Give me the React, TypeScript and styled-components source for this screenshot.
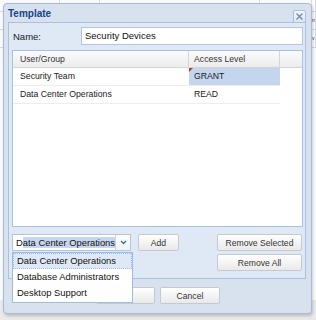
import styled, { createGlobalStyle } from 'styled-components';

const FONT = '"Liberation Sans", Arial, sans-serif';

const GlobalStyle = createGlobalStyle`
  html, body {
    margin: 0;
    padding: 0;
    background: #ececec;
    font-family: ${FONT};
  }
`;

const Desktop = styled.div`
  position: relative;
  width: 316px;
  height: 320px;
  overflow: hidden;
  background: #e9e9e9;
`;

// grid that sits behind the window; only its edges show
const Backdrop = styled.div`
  display: flex;
  flex-direction: column;
  background: #fafafa;
  height: 300px;
`;

const BackRow = styled.div`
  height: 17px;
  border-bottom: 1px solid #d6d6d6;
  display: grid;
  grid-template-columns: 60px 40px 160px 52px 1fr;
  color: #333;
  line-height: 17px;

  & > span {
    border-right: 1px solid #dcdcdc;
    white-space: nowrap;
    overflow: hidden;
  }
`;

const EdgeText = styled.span`
  font-size: 5px;
  padding-left: 0;
`;

const Window = styled.div`
  position: absolute;
  left: 3px;
  top: 3px;
  width: 309px;
  height: 311px;
  box-sizing: border-box;
  border: 1px solid #a4bcd9;
  border-radius: 4px;
  background: #d8e2ee;
  box-shadow: 1px 2px 3px rgba(0, 0, 0, 0.18);
  display: flex;
  flex-direction: column;
`;

const Header = styled.div`
  height: 18px;
  display: flex;
  align-items: center;
  justify-content: space-between;
  padding: 0 5px 0 4px;
`;

const Title = styled.span`
  font-size: 10px;
  font-weight: bold;
  color: #15428b;
`;

const CloseButton = styled.div`
  width: 11px;
  height: 11px;
  border: 1px solid #a7bfdc;
  border-radius: 2px;
  background: linear-gradient(#f3f7fc, #dde7f3);
  display: flex;
  align-items: center;
  justify-content: center;
  margin-top: 6px;
`;

const BodyPanel = styled.div`
  margin: 0 5px 0 4px;
  height: 257px;
  box-sizing: border-box;
  border: 1px solid #a9c0de;
  background: #dfe8f5;
  padding: 4px 2px 0 2px;
  display: flex;
  flex-direction: column;
`;

const FieldRow = styled.div`
  display: flex;
  align-items: center;
  height: 18px;
`;

const Label = styled.span`
  width: 68px;
  padding-left: 2px;
  font-size: 9.5px;
  color: #222;
`;

const TextInput = styled.div`
  flex: 1;
  height: 18px;
  box-sizing: border-box;
  border: 1px solid #b5c6dc;
  background: #fff;
  font-size: 9.5px;
  line-height: 16px;
  padding-left: 3px;
  color: #111;
`;

const Grid = styled.div`
  margin-top: 5px;
  margin-left: 1px;
  height: 177px;
  box-sizing: border-box;
  border: 1px solid #a9c0de;
  background: #fff;
  font-size: 8.7px;
`;

const GridHeader = styled.div`
  display: grid;
  grid-template-columns: 176px 91px 1fr;
  height: 16px;
  background: linear-gradient(#fbfbfb, #ececec);
  border-bottom: 1px solid #d4d4d4;
`;

const HeaderCell = styled.div<{ $pad: number }>`
  border-right: 1px solid #d6d6d6;
  padding-left: ${p => p.$pad}px;
  line-height: 16px;
  color: #333;

  &:last-child {
    border-right: none;
  }
`;

const GridRow = styled.div`
  display: grid;
  grid-template-columns: 176px 91px;
  width: 267px;
  height: 17px;
  border-bottom: 1px solid #ededed;
`;

const Cell = styled.div<{ $pad: number; $selected?: boolean; $dirty?: boolean }>`
  position: relative;
  padding-left: ${p => p.$pad}px;
  line-height: 17px;
  color: #1a1a1a;
  background: ${p => (p.$selected ? '#c3d6ee' : 'transparent')};

  ${p =>
    p.$dirty &&
    `
    &::before {
      content: '';
      position: absolute;
      left: 0;
      top: 0;
      border-top: 4px solid #c0392b;
      border-right: 4px solid transparent;
    }
  `}
`;

const Controls = styled.div`
  margin-top: 7px;
  display: flex;
  align-items: flex-start;
`;

const ComboWrap = styled.div`
  position: relative;
  margin-left: 1px;
`;

const Combo = styled.div`
  width: 119px;
  height: 17px;
  box-sizing: border-box;
  border: 1px solid #b5c6dc;
  background: #fff;
  display: flex;
  align-items: center;
`;

const ComboText = styled.div`
  flex: 1;
  font-size: 9.4px;
  padding-left: 3px;
  white-space: nowrap;
  overflow: hidden;
  color: #111;
`;

const Selected = styled.span`
  background: #c5d6ee;
  padding: 2px 0;
`;

const Trigger = styled.div`
  width: 14px;
  height: 15px;
  border-left: 1px solid #c9d6e6;
  background: linear-gradient(#ffffff, #eef3f9);
  display: flex;
  align-items: center;
  justify-content: center;
`;

const DropList = styled.div`
  position: absolute;
  left: 0;
  top: 18px;
  width: 121px;
  box-sizing: border-box;
  border: 1px solid #9cbbe6;
  background: #fff;
  padding: 0 0 1px;
  z-index: 2;
`;

const DropItem = styled.div<{ $active?: boolean }>`
  height: 16px;
  box-sizing: border-box;
  line-height: 14px;
  padding-left: 3px;
  font-size: 9.4px;
  color: #111;
  white-space: nowrap;
  border: 1px ${p => (p.$active ? 'dotted #a3bae9' : 'solid transparent')};
  background: ${p => (p.$active ? '#dfe8f6' : '#fff')};
`;

const Button = styled.div<{ $width: number }>`
  width: ${p => p.$width}px;
  height: 17px;
  box-sizing: border-box;
  border: 1px solid #c6c9cf;
  border-radius: 2px;
  background: linear-gradient(#ffffff, #e9e9e9);
  font-size: 8.6px;
  color: #333;
  display: flex;
  align-items: center;
  justify-content: center;
`;

const AddSlot = styled.div`
  margin-left: 7px;
`;

const RightButtons = styled.div`
  margin-left: auto;
  margin-right: 1px;
  display: flex;
  flex-direction: column;
  gap: 3px;
`;

const Footer = styled.div`
  display: flex;
  justify-content: center;
  gap: 5px;
  padding-top: 8px;
  padding-left: 1px;
`;

const edgeLetters = ['', 'm', 'v'];

export default function App() {
  return (
    <>
      <GlobalStyle />
      <Desktop>
        <Backdrop>
          {edgeLetters.map((t, j) => (
            <BackRow key={j} style={j === 0 ? { marginTop: -6 } : undefined}>
              <span />
              <span />
              <span />
              <span />
              <EdgeText>{t}</EdgeText>
            </BackRow>
          ))}
        </Backdrop>

        <Window>
          <Header>
            <Title>Template</Title>
            <CloseButton>
              <svg width="9" height="9" viewBox="0 0 9 9">
                <path d="M1.5 1.5 L7.5 7.5 M7.5 1.5 L1.5 7.5" stroke="#6f8bb0" strokeWidth="1.4" />
              </svg>
            </CloseButton>
          </Header>

          <BodyPanel>
            <FieldRow>
              <Label>Name:</Label>
              <TextInput>Security Devices</TextInput>
            </FieldRow>

            <Grid>
              <GridHeader>
                <HeaderCell $pad={7}>User/Group</HeaderCell>
                <HeaderCell $pad={5}>Access Level</HeaderCell>
                <HeaderCell $pad={0} />
              </GridHeader>
              <GridRow>
                <Cell $pad={7}>Security Team</Cell>
                <Cell $pad={5} $selected $dirty>
                  GRANT
                </Cell>
              </GridRow>
              <GridRow>
                <Cell $pad={7}>Data Center Operations</Cell>
                <Cell $pad={5}>READ</Cell>
              </GridRow>
            </Grid>

            <Controls>
              <ComboWrap>
                <Combo>
                  <ComboText>
                    D<Selected>ata Center Operations</Selected>
                  </ComboText>
                  <Trigger>
                    <svg width="7" height="5" viewBox="0 0 7 5">
                      <path d="M1 1 L3.5 3.5 L6 1" stroke="#3d6aa8" strokeWidth="1.3" fill="none" />
                    </svg>
                  </Trigger>
                </Combo>
                <DropList>
                  <DropItem $active>Data Center Operations</DropItem>
                  <DropItem>Database Administrators</DropItem>
                  <DropItem>Desktop Support</DropItem>
                </DropList>
              </ComboWrap>
              <AddSlot>
                <Button $width={41}>Add</Button>
              </AddSlot>
              <RightButtons>
                <Button $width={85}>Remove Selected</Button>
                <Button $width={85}>Remove All</Button>
              </RightButtons>
            </Controls>
          </BodyPanel>

          <Footer>
            <Button $width={59}>OK</Button>
            <Button $width={60}>Cancel</Button>
          </Footer>
        </Window>
      </Desktop>
    </>
  );
}
